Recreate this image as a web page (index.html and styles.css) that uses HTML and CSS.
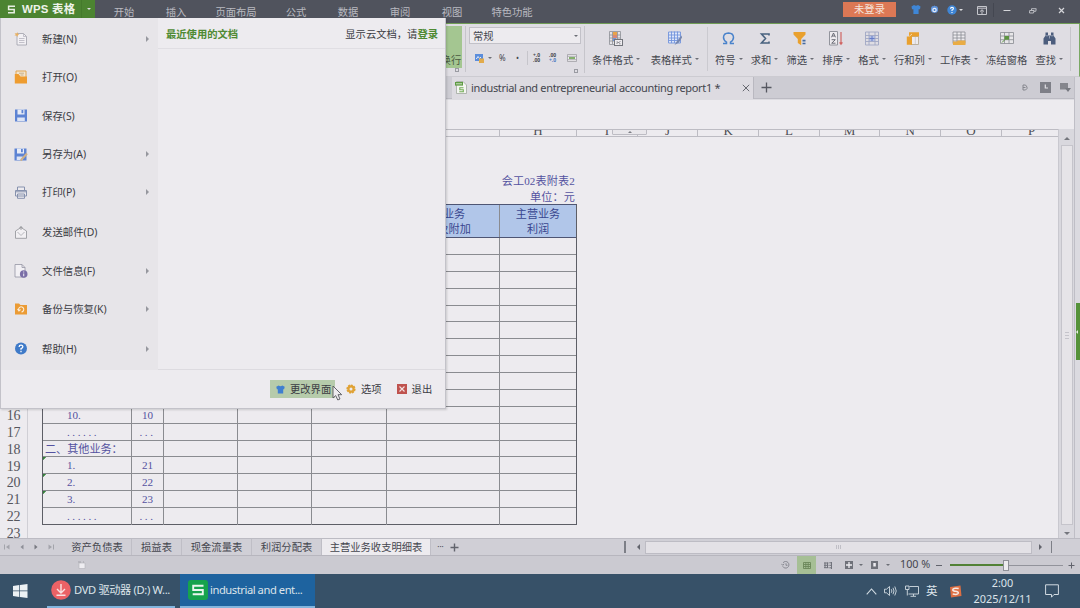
FILE: index.html
```html
<!DOCTYPE html>
<html lang="zh-CN">
<head>
    <meta charset="UTF-8">
    <meta name="viewport" content="width=device-width, initial-scale=1.0">
    <title>WPS 表格</title>
    <link rel="stylesheet" href="styles.css">
</head>
<body>
    <!-- title bar -->
    <header class="titlebar">
        <div class="app-button">
            <svg width="9" height="9" viewBox="0 0 9 9"><path d="M8 1.2H1.6V4.4H7.2V7.8H1" fill="none" stroke="#e8efe2" stroke-width="1.5"/></svg>
            <b>WPS 表格</b>
            <span class="app-arrow"><i class="caret light"></i></span>
        </div>
        <nav class="main-tabs">
            <span>开始</span><span>插入</span><span class="wide">页面布局</span><span>公式</span><span>数据</span><span>审阅</span><span>视图</span><span class="wide">特色功能</span>
        </nav>
        <div class="window-tools">
            <span class="login">未登录</span>
            <svg class="t-skin" width="10" height="9" viewBox="0 0 10 9"><path d="M0.5 1.5L3 0Q5 1.6 7 0L9.5 1.5L9 4.2H7.6V9H2.4V4.2H1Z" fill="#3f86d6"/></svg>
            <svg class="t-cloud" width="9" height="9" viewBox="0 0 9 9"><path d="M1 3L2 1.2H3.4L4.5 0.6L5.6 1.2H7L8 3V6Q7 8 4.5 8Q2 8 1 6Z" fill="#5f94dd"/><circle cx="4.5" cy="5" r="2.3" fill="#e6eefa"/><circle cx="4.5" cy="5" r="1" fill="#3f7ccc"/></svg>
            <svg class="t-help" width="10" height="10" viewBox="0 0 10 10"><circle cx="5" cy="5" r="4.7" fill="#3f86d6"/><path d="M3.5 3.8Q3.6 2.4 5 2.4Q6.5 2.4 6.4 3.7Q6.3 4.6 5 5.1V6M5 6.9V8" fill="none" stroke="#fff" stroke-width="1.1"/></svg>
            <i class="caret light"></i>
            <svg class="t-ribbon" width="10" height="9" viewBox="0 0 10 9"><path d="M0.5 0.5H9.5V8.5H0.5ZM0.5 2.2H9.5M5 8V4M3 5.6L5 3.7L7 5.6" fill="none" stroke="#c5c6cc"/></svg>
            <span class="t-line"></span>
            <svg class="t-min" width="8" height="9" viewBox="0 0 8 9"><path d="M0.5 4.5H7.5" stroke="#d5d6da"/></svg>
            <svg class="t-max" width="8" height="8" viewBox="0 0 8 8"><path d="M0.7 3.5H5L4.5 6H0.5ZM2.5 3.2V1.7H7.2L6.8 4.3H5" fill="none" stroke="#c5c6cc" stroke-width="0.9"/></svg>
            <svg class="t-close" width="7" height="7" viewBox="0 0 7 7"><path d="M1 1L6 6M6 1L1 6" stroke="#d5d6da" stroke-width="1.2"/></svg>
        </div>
    </header>

    <!-- ribbon -->
    <section class="ribbon">
        <div class="wrap-group">
            <div class="wrap-button">自动换行</div>
            <span class="corner"></span>
        </div>
        <div class="number-group">
            <div class="number-select">常规<i class="caret"></i></div>
            <div class="number-tools">
                <svg width="9" height="9" viewBox="0 0 9 9"><rect width="8" height="7" fill="#5b8ddb"/><path d="M1.3 5L3 2.5L4.5 4.5L6 3" fill="none" stroke="#e8effa"/><rect x="4" y="4.5" width="5" height="4.5" fill="#e2ab4b"/></svg>
                <i class="caret"></i>
                <span class="percent">%</span>
                <span class="comma">•</span>
                <span class="tool-line"></span>
                <span class="dec"><em>+.0</em><em>.00</em></span>
                <span class="dec"><em>.00</em><em class="blue">+.0</em></span>
                <svg width="10" height="8" viewBox="0 0 10 8"><path d="M0.5 0.5H9.5V7.5H0.5ZM0.5 2.3H9.5M0.5 5.7H9.5" fill="#edebef" stroke="#96979c" stroke-width="0.7"/><path d="M2 4H8" stroke="#69a04c" stroke-width="1.6"/></svg>
            </div>
            <span class="corner"></span>
        </div>
        <div class="tool-group styles-group">
            <div class="tool">
                <svg width="14" height="15" viewBox="0 0 14 15"><path d="M0.5 0.5H11.5V13.5H0.5ZM0.5 4H11.5M0.5 7H11.5M0.5 10H11.5M3.5 1V13M8.5 1V13" fill="#e6e4e8" stroke="#8d8f96" stroke-width="0.8"/><rect x="4" y="1" width="4" height="3" fill="#e8a34a"/><rect x="4" y="4" width="4" height="3" fill="#d88878"/><rect x="4" y="7" width="3" height="3" fill="#6f96da"/><rect x="5.5" y="8.5" width="8" height="6" fill="#edebef" stroke="#73757c"/><path d="M7.5 12.5L11.5 10.5M7.5 11H9M10 12.8H11.5" stroke="#73757c" stroke-width="0.8"/></svg>
                <span>条件格式<i class="caret"></i></span>
            </div>
            <div class="tool">
                <svg width="14" height="14" viewBox="0 0 14 14"><path d="M0.5 0.5H12.5V11.5H0.5Z" fill="#dfe6f7"/><path d="M0.5 0.5H12.5V11.5H0.5ZM0.5 3.5H12.5M0.5 6.5H12.5M0.5 9H12.5M3.5 0V11.5M6.5 0V11.5M9.5 0V11.5" fill="none" stroke="#7394dc" stroke-width="0.9"/><path d="M13.5 4L9 9.5L6.5 13.5L11 11L14 6Z" fill="#7787ae"/></svg>
                <span>表格样式<i class="caret"></i></span>
            </div>
        </div>
        <div class="tool-group edit-group">
            <div class="tool">
                <svg width="13" height="14" viewBox="0 0 13 14"><path d="M1 12H4.5V10.7Q1.5 8.8 1.5 5.8Q1.7 1.7 6.5 1.5Q11.3 1.7 11.5 5.8Q11.5 8.8 8.5 10.7V12H12" fill="none" stroke="#4a83cb" stroke-width="1.5"/></svg>
                <span>符号<i class="caret"></i></span>
            </div>
            <div class="tool">
                <svg width="12" height="14" viewBox="0 0 12 14"><path d="M10 4V2.5H2.5L6.5 7L2.5 11.5H10V10" fill="none" stroke="#48627f" stroke-width="1.6"/></svg>
                <span>求和<i class="caret"></i></span>
            </div>
            <div class="tool">
                <svg width="14" height="14" viewBox="0 0 14 14"><path d="M0.5 0.5H12.5V3L8.2 7.5V13.8L4.8 11.5V7.5L0.5 3Z" fill="#e9a02e"/><path d="M9.5 9.2H12.5M9.5 12H12.5" stroke="#446a9f" stroke-width="1.7"/></svg>
                <span>筛选<i class="caret"></i></span>
            </div>
            <div class="tool">
                <svg width="14" height="15" viewBox="0 0 14 15"><path d="M0.5 0.5H8.5V14H0.5Z" fill="#edebef" stroke="#92949c"/><path d="M2.5 6.3L4.5 2L6.5 6.3M3.2 5H5.8M2.6 8.7H6.3L2.7 12.2H6.5" fill="none" stroke="#5c5f69" stroke-width="0.9"/><path d="M12 1V13M10.6 11.3L12 13.3L13.4 11.3" fill="none" stroke="#d06563" stroke-width="1.2"/></svg>
                <span>排序<i class="caret"></i></span>
            </div>
            <div class="tool">
                <svg width="14" height="14" viewBox="0 0 14 14"><rect x="4" y="4" width="6" height="6" fill="#b4c0e6"/><path d="M0.5 0.5H13.5V13.5H0.5ZM0.5 4H13.5M0.5 7H13.5M0.5 10H13.5M4 0.5V13.5M10 0.5V13.5" fill="none" stroke="#a0a7c4" stroke-width="0.9"/><path d="M7 4.5V9.5M4.5 7H9.5" stroke="#667cc8"/></svg>
                <span>格式<i class="caret"></i></span>
            </div>
            <div class="tool">
                <svg width="14" height="14" viewBox="0 0 14 14"><path d="M5 5H12.5V13H5Z" fill="#edebef" stroke="#b5a995" stroke-width="0.9"/><path d="M3 0.8H13V5H6V13.2H0.8V5H3Z" fill="#e9a02e"/><path d="M3.3 4.8L6 2.5" stroke="#f3e6cf" stroke-width="0.8"/><path d="M9.3 5.5V12.5" stroke="#c9c7cd" stroke-width="0.8"/></svg>
                <span>行和列<i class="caret"></i></span>
            </div>
            <div class="tool">
                <svg width="14" height="14" viewBox="0 0 14 14"><path d="M1 0.5H13V12H1ZM1 3.5H13M1 6.5H13M1 9.5H13M5 0.5V12M9 0.5V12" fill="#edebef" stroke="#898b92" stroke-width="0.8"/><path d="M1 10H5L6 9H13.5V13.5H1Z" fill="#e9ac45"/></svg>
                <span>工作表<i class="caret"></i></span>
            </div>
            <div class="tool">
                <svg width="14" height="14" viewBox="0 0 14 14"><path d="M0.5 1H13.5V12H0.5ZM0.5 4.5H13.5M0.5 8.2H13.5M4.5 1V12M9 1V12" fill="#e8e7e9" stroke="#898b92" stroke-width="0.8"/><path d="M4.5 4.5H9V8.2H4.5Z" fill="#5c9440"/><path d="M2 11L5 8" stroke="#5c9440"/></svg>
                <span>冻结窗格</span>
            </div>
            <div class="tool">
                <svg width="13" height="14" viewBox="0 0 13 14"><path d="M2.5 1H5V4H8V1H10.5V4L12.5 7V13H8V9.5H5V13H0.5V7L2.5 4Z" fill="#4c5d7d"/><path d="M6.5 4.5V7M2.7 4.3H5M8 4.3H10.3" stroke="#aab3c4" stroke-width="0.8"/></svg>
                <span>查找<i class="caret"></i></span>
            </div>
        </div>
    </section>

    <div class="workspace">
        <div class="work-main">
            <!-- document tabs -->
            <div class="doc-tabs">
                <div class="doc-tab">
                    <svg width="12" height="13" viewBox="0 0 12 13"><path d="M1.5 0.5H8L11.5 4V12.5H1.5Z" fill="#f4f5f2" stroke="#a1a8a0" stroke-width="0.8"/><rect y="1" width="8" height="3.6" fill="#5d9b42"/><path d="M1 2.8H7" stroke="#cfe1c5"/><path d="M8.5 6.8H4.8V8.7H8.3V10.7H4.3" fill="none" stroke="#73ad57" stroke-width="1.1"/></svg>
                    <span>industrial and entrepreneurial accounting report1 *</span>
                    <svg class="tab-close" width="8" height="8" viewBox="0 0 8 8"><path d="M0.8 0.8L7.2 7.2M7.2 0.8L0.8 7.2" stroke="#666870"/></svg>
                </div>
                <svg class="doc-add" width="11" height="11" viewBox="0 0 11 11"><path d="M5.5 0.5V10.5M0.5 5.5H10.5" stroke="#565861" stroke-width="1.3"/></svg>
                <div class="doc-tools">
                    <svg width="6" height="7" viewBox="0 0 6 7"><path d="M1 1H3.5L5 3V4.5L3.5 6H1ZM1 3.5H3.5" fill="none" stroke="#85868d"/></svg>
                    <svg width="11" height="11" viewBox="0 0 11 11"><rect width="11" height="11" fill="#7e7f87"/><path d="M5.3 2.5V6H8" fill="none" stroke="#e0dfe4" stroke-width="1.2"/></svg>
                    <svg width="11" height="9" viewBox="0 0 11 9"><path d="M0 0H8V6.5H0Z" fill="#85868d"/><path d="M5 5H11L8 9Z" fill="#777980"/></svg>
                </div>
            </div>

            <div class="formula-bar"></div>

            <div class="sheet-area">
                <div class="sheet">
                    <div class="col-heads">
                        <span class="col-left"></span><span class="col-h">H</span><span>I</span><span>J</span><span>K</span><span>L</span><span>M</span><span>N</span><span>O</span><span>P</span>
                        <div class="fold-handle"><i></i></div>
                    </div>
                    <div class="sheet-body">
                        <div class="row-heads">
                            <span>16</span><span>17</span><span>18</span><span>19</span><span>20</span><span>21</span><span>22</span><span>23</span>
                        </div>
                        <div class="sheet-cells">
                            <div class="caption">会工02表附表2</div>
                            <div class="caption">单位：元</div>
                            <div class="report">
                                <div class="r head"><i></i><i></i><i></i><i></i><i></i><i>主营业务<br>税金及附加</i><i>主营业务<br>利润</i></div>
                                <div class="r"><i></i><i></i><i></i><i></i><i></i><i></i><i></i></div>
                                <div class="r"><i></i><i></i><i></i><i></i><i></i><i></i><i></i></div>
                                <div class="r"><i></i><i></i><i></i><i></i><i></i><i></i><i></i></div>
                                <div class="r"><i></i><i></i><i></i><i></i><i></i><i></i><i></i></div>
                                <div class="r"><i></i><i></i><i></i><i></i><i></i><i></i><i></i></div>
                                <div class="r"><i></i><i></i><i></i><i></i><i></i><i></i><i></i></div>
                                <div class="r"><i></i><i></i><i></i><i></i><i></i><i></i><i></i></div>
                                <div class="r"><i></i><i></i><i></i><i></i><i></i><i></i><i></i></div>
                                <div class="r"><i></i><i></i><i></i><i></i><i></i><i></i><i></i></div>
                                <div class="r"><i></i><i></i><i></i><i></i><i></i><i></i><i></i></div>
                                <div class="r"><i>10.</i><i>10</i><i></i><i></i><i></i><i></i><i></i></div>
                                <div class="r dots"><i>......</i><i>...</i><i></i><i></i><i></i><i></i><i></i></div>
                                <div class="r"><i class="group">二、其他业务：</i><i></i><i></i><i></i><i></i><i></i><i></i></div>
                                <div class="r"><i class="mark">1.</i><i>21</i><i></i><i></i><i></i><i></i><i></i></div>
                                <div class="r"><i class="mark">2.</i><i>22</i><i></i><i></i><i></i><i></i><i></i></div>
                                <div class="r"><i class="mark">3.</i><i>23</i><i></i><i></i><i></i><i></i><i></i></div>
                                <div class="r dots"><i>......</i><i>...</i><i></i><i></i><i></i><i></i><i></i></div>
                            </div>
                        </div>
                    </div>
                </div>
                <div class="v-scroll">
                    <i class="arrow up"></i>
                    <div class="v-thumb"><i></i><i></i><i></i></div>
                    <i class="arrow down"></i>
                </div>
            </div>
        </div>
        <aside class="side-strip"><div class="side-handle"><i></i></div></aside>
    </div>

    <!-- sheet tabs -->
    <div class="sheet-tabs">
        <div class="tab-nav">
            <svg width="6" height="6" viewBox="0 0 6 6"><path d="M0.5 0.5V5.5" stroke="#a3a4ab"/><path d="M5.5 0.5V5.5L2 3Z" fill="#a3a4ab"/></svg>
            <svg width="6" height="6" viewBox="0 0 6 6"><path d="M4.5 0.5V5.5L1.5 3Z" fill="#8d8f97"/></svg>
            <svg width="6" height="6" viewBox="0 0 6 6"><path d="M1.5 0.5V5.5L4.5 3Z" fill="#777980"/></svg>
            <svg width="6" height="6" viewBox="0 0 6 6"><path d="M5.5 0.5V5.5" stroke="#a3a4ab"/><path d="M0.5 0.5V5.5L4 3Z" fill="#a3a4ab"/></svg>
        </div>
        <span class="s-tab">资产负债表</span><span class="s-tab t2">损益表</span><span class="s-tab t3">现金流量表</span><span class="s-tab t3">利润分配表</span><span class="s-tab active">主营业务收支明细表</span>
        <span class="more">···</span>
        <svg width="9" height="9" viewBox="0 0 9 9"><path d="M4.5 0.5V8.5M0.5 4.5H8.5" stroke="#62646d" stroke-width="1.4"/></svg>
        <div class="h-scroll">
            <span class="bar"></span><i class="arrow left"></i>
            <div class="h-thumb"><i></i><i></i><i></i></div>
            <i class="arrow right"></i><span class="bar"></span>
        </div>
    </div>

    <!-- status bar -->
    <footer class="status">
        <svg class="s-doc" width="8" height="8" viewBox="0 0 8 8"><path d="M1 2H7V7.5H1Z" fill="#eeedf1" stroke="#b1b1b8" stroke-width="0.6"/><path d="M0 1H3M5 1H6" stroke="#a3a3aa"/></svg>
        <div class="status-right">
            <svg class="s-hist" width="9" height="8" viewBox="0 0 9 8"><path d="M2 1.8A3.3 3.3 0 1 1 1.7 5.3M0.3 2.8L1.8 4.3L3 2.8M5 2.3V4.3H6.5" fill="none" stroke="#777982" stroke-width="0.8"/></svg>
            <span class="view-on"><svg width="8" height="7" viewBox="0 0 8 7"><path d="M0.5 0.5H7.5V6.5H0.5ZM0.5 2.5H7.5M0.5 4.5H7.5M2.8 0.5V6.5M5.2 0.5V6.5" fill="none" stroke="#6b8759" stroke-width="0.9"/></svg></span>
            <svg class="s-page" width="8" height="7" viewBox="0 0 8 7"><path d="M0 1H4.5M0 3.3H4.5M0 5.7H4.5M1 0.5V6M3.5 0.5V6M5.3 0.8H8M5.3 3.3H8M5.3 5.8H8M7.5 0V7" fill="none" stroke="#70727b" stroke-width="1"/></svg>
            <svg class="s-split" width="8" height="8" viewBox="0 0 8 8"><path d="M0 0H8V8H0Z" fill="#6f7179"/><path d="M4 1V7M1 4H7" stroke="#eeedf1" stroke-width="1.3"/></svg>
            <i class="caret"></i>
            <svg class="s-book" width="7" height="8" viewBox="0 0 7 8"><path d="M0 0H7V8H0Z" fill="#6f7179"/><rect x="2.3" y="2" width="2.5" height="3.5" fill="#eeedf1"/></svg>
            <i class="caret"></i>
            <span class="zoom-num">100 %</span>
            <span class="zoom-minus"></span>
            <div class="zoom-track"><span class="zoom-fill"></span><span class="zoom-knob"></span><span class="zoom-rest"></span></div>
            <svg width="7" height="7" viewBox="0 0 7 7"><path d="M3.5 0.5V6.5M0.5 3.5H6.5" stroke="#62646d"/></svg>
        </div>
    </footer>

    <!-- taskbar -->
    <div class="taskbar">
        <svg class="win" width="15" height="14" viewBox="0 0 15 14"><path d="M0 2L6.3 1.1V6.6H0ZM7 1L14.5 0V6.6H7ZM0 7.3H6.3V12.9L0 12ZM7 7.3H14.5V14L7 13Z" fill="#edf1f4"/></svg>
        <div class="task">
            <svg width="20" height="20" viewBox="0 0 20 20"><circle cx="10" cy="10" r="9.8" fill="#ec6266"/><path d="M10 4V12.5M6 9L10 13L14 9M5.5 15.3H14.5" fill="none" stroke="#f9e3e3" stroke-width="1.4"/></svg>
            <span>DVD 驱动器 (D:) W...</span>
        </div>
        <div class="task active">
            <svg width="20" height="20" viewBox="0 0 20 20"><rect width="20" height="20" rx="3" fill="#16a34d"/><path d="M15.5 5.8H5.2V10H14.8V14.3H4.7" fill="none" stroke="#eaf6ee" stroke-width="1.9"/></svg>
            <span>industrial and ent...</span>
        </div>
        <div class="tray">
            <svg width="11" height="7" viewBox="0 0 11 7"><path d="M0.7 6.3L5.5 1L10.3 6.3" fill="none" stroke="#d2dbe2" stroke-width="1.1"/></svg>
            <svg width="13" height="12" viewBox="0 0 13 12"><path d="M0.5 4.2H2.5L5.5 1.5V10.5L2.5 7.8H0.5ZM7.3 4.2Q8.5 6 7.3 7.8M9 2.8Q11 6 9 9.2M10.8 1.5Q13.7 6 10.8 10.5" fill="none" stroke="#d2dbe2" stroke-width="0.9"/></svg>
            <svg width="14" height="12" viewBox="0 0 14 12"><path d="M4.5 1.5H13.5V9H3.5M5.5 11.3H11M8.5 9V11M0.5 1H4V4.5H0.5ZM2.3 4.5V10.5" fill="none" stroke="#d2dbe2" stroke-width="0.9"/></svg>
            <span class="ime">英</span>
            <svg class="sogou" width="13" height="13" viewBox="0 0 13 13"><path d="M1 2L11.5 0.5L12.5 11L2 12.5Z" fill="#dd6f43"/><path d="M9.7 3.6Q3.8 2.7 3.8 4.8Q4 6.2 6.5 6.3Q9.5 6.5 9.3 8Q9 10.1 3.7 9" fill="none" stroke="#f6e9e4" stroke-width="1.5"/></svg>
            <div class="clock">2:00<br>2025/12/11</div>
            <svg width="14" height="14" viewBox="0 0 14 14"><path d="M0.6 0.8H13.4V10.5H9L6.5 13.2V10.5H0.6Z" fill="none" stroke="#d2dbe2" stroke-width="1"/></svg>
        </div>
    </div>

    <!-- file menu -->
    <div class="file-menu">
        <div class="menu-top">
            <ul class="menu-list">
                <li>
                    <svg width="13" height="14" viewBox="0 0 13 14"><path d="M2.5 1.5H9L12 4.5V13H2.5Z" fill="#f2f0f4" stroke="#a09faa" stroke-width="0.8"/><path d="M9 1.5V4.5H12M4.5 6.5H10M4.5 8.5H10M4.5 10.5H10" fill="none" stroke="#b5b4be" stroke-width="0.8"/><path d="M0 1L2 1.5L3 0L3.3 2L5 2.5L3.3 3.3L3 5L2 3.4L0 3.5L1.2 2.3Z" fill="#e9b061"/></svg>
                    <span>新建(N)</span><i class="sub"></i>
                </li>
                <li>
                    <svg width="13" height="14" viewBox="0 0 13 14"><path d="M1.5 1H11.5V8H1.5Z" fill="#f4e5cd" stroke="#e0a654"/><path d="M4.5 3.2H9.5M6 5H9" stroke="#c8b08a"/><path d="M0.3 4H4L6 6.5H12.5V13.5H0.3Z" fill="#ee9c30"/></svg>
                    <span>打开(O)</span>
                </li>
                <li>
                    <svg width="13" height="13" viewBox="0 0 13 13"><path d="M0.5 0.5H12.5V12.5H0.5Z" fill="#5d83d3"/><rect x="3" y="0.5" width="7" height="5" fill="#e8ecf6"/><rect x="7" y="1" width="1.8" height="3.2" fill="#5d83d3"/><rect x="2.7" y="8.5" width="7.6" height="3.5" fill="#dde4f4"/></svg>
                    <span>保存(S)</span>
                </li>
                <li>
                    <svg width="14" height="13" viewBox="0 0 14 13"><path d="M0.5 0.5H12.5V12.5H0.5Z" fill="#5d83d3"/><rect x="3" y="0.5" width="7" height="5" fill="#e8ecf6"/><rect x="7" y="1" width="1.8" height="3.2" fill="#5d83d3"/><rect x="2.7" y="8.5" width="6" height="3.5" fill="#dde4f4"/><path d="M13 5.5L8 11L6.7 12.7" stroke="#cdb089" stroke-width="2"/></svg>
                    <span>另存为(A)</span><i class="sub"></i>
                </li>
                <li>
                    <svg width="13" height="13" viewBox="0 0 13 13"><path d="M3 4.5V1H10V4.5M1 4.5H12V10H1ZM3 8H10V12.3H3Z" fill="#edebef" stroke="#8792ae" stroke-width="1"/><path d="M1 5.8H12" stroke="#8792ae"/></svg>
                    <span>打印(P)</span><i class="sub"></i>
                </li>
                <li class="gap">
                    <svg width="13" height="13" viewBox="0 0 13 13"><path d="M1 5L6.5 1.5L12 5V12.3H1Z" fill="#f2f0f3" stroke="#8f9096" stroke-width="0.8"/><path d="M3 6L6.5 9.5L10 6" fill="none" stroke="#a6a7ad" stroke-width="0.8"/><path d="M6.5 0.5V4M5 2L6.5 0.5L8 2" fill="none" stroke="#8f9096" stroke-width="0.8"/></svg>
                    <span>发送邮件(D)</span>
                </li>
                <li>
                    <svg width="14" height="14" viewBox="0 0 14 14"><path d="M1 0.5H8L11 3.5V13H1Z" fill="#f2f0f4" stroke="#9695a3" stroke-width="0.8"/><path d="M8 0.5V3.5H11" fill="none" stroke="#9695a3" stroke-width="0.8"/><circle cx="9.7" cy="10" r="3.8" fill="#7a6ea6"/><path d="M9.7 7.6V8.6M9.7 9.5V12.3" stroke="#e8e4f0" stroke-width="1.1"/></svg>
                    <span>文件信息(F)</span><i class="sub"></i>
                </li>
                <li>
                    <svg width="13" height="12" viewBox="0 0 13 12"><path d="M0.5 0.5H4.5L6 2H12.5V11.5H0.5Z" fill="#eb9b35"/><path d="M4.3 7.5A2.6 2.6 0 1 1 7 9M3 6L4.4 8L6 6.5" fill="none" stroke="#fbeeda" stroke-width="1.1"/></svg>
                    <span>备份与恢复(K)</span><i class="sub"></i>
                </li>
                <li class="gap">
                    <svg width="13" height="13" viewBox="0 0 13 13"><circle cx="6.5" cy="6.5" r="6" fill="#3f7ac8"/><path d="M4.6 5Q4.7 3.2 6.5 3.2Q8.5 3.2 8.3 4.9Q8.2 6 6.5 6.7V7.8M6.5 8.8V10.2" fill="none" stroke="#fff" stroke-width="1.3"/></svg>
                    <span>帮助(H)</span><i class="sub"></i>
                </li>
            </ul>
            <div class="recent">
                <div class="recent-head">
                    <b>最近使用的文档</b>
                    <span>显示云文档，请<b>登录</b></span>
                </div>
            </div>
        </div>
        <div class="menu-bottom">
            <span class="m-btn on"><svg width="9" height="9" viewBox="0 0 10 9"><path d="M0.3 1.5L3 0Q5 1.6 7 0L9.7 1.5L9 4.2H8V9H2V4.2H1Z" fill="#3f7fd0"/></svg>更改界面</span>
            <span class="m-btn opt"><svg width="10" height="10" viewBox="0 0 10 10"><circle cx="5" cy="5" r="3.7" fill="none" stroke="#e0a235" stroke-width="1.8" stroke-dasharray="2 0.8"/><circle cx="5" cy="5" r="2.6" fill="none" stroke="#e0a235" stroke-width="2.2"/></svg>选项</span>
            <span class="m-btn quit"><svg width="10" height="10" viewBox="0 0 10 10"><rect width="10" height="10" fill="#bf524e"/><path d="M2.5 2.5L7.5 7.5M7.5 2.5L2.5 7.5" stroke="#f3e2e1" stroke-width="1.1"/></svg>退出</span>
        </div>
        <svg class="pointer" width="12" height="17" viewBox="0 0 12 17"><path d="M1 1V13L3.7 10.6L5.8 15L8 14L6 9.7H9.7Z" fill="#edebef" stroke="#55565c" stroke-width="0.9"/></svg>
    </div>
</body>
</html>
```
FILE: styles.css
```css
* {
    box-sizing: border-box;
}

body {
    margin: 0;
    width: 1080px;
    height: 608px;
    overflow: hidden;
    position: relative;
    display: flex;
    flex-direction: column;
    background-color: #edebef;
    color: #44464e;
    font-family: "Noto Sans", "Noto Sans CJK SC", sans-serif;
    font-size: 10.3px;
    line-height: 14px;
    white-space: nowrap;
}

svg {
    display: block;
    flex: none;
}

i, em {
    font-style: normal;
}

.caret {
    display: inline-block;
    border-left: 2px solid transparent;
    border-right: 2px solid transparent;
    border-top: 2.5px solid #6c6e76;
}

.caret.light {
    border-top-color: #dcdde0;
}

/* title bar */
.titlebar {
    height: 24px;
    flex: none;
    display: flex;
    background-color: #50535d;
    border-bottom: 1px solid #6f9c55;
    color: #b9bac0;
}

.app-button {
    width: 95px;
    height: 18px;
    display: flex;
    align-items: center;
    padding-left: 7px;
    background-color: #4c8431;
    color: #eef3ea;
}

.app-button b {
    margin-left: 6px;
    width: 59px;
    font-family: "Liberation Sans", "Noto Sans CJK SC", sans-serif;
    font-size: 11.4px;
    letter-spacing: 0.25px;
}

.app-arrow {
    width: 14px;
    height: 18px;
    display: flex;
    align-items: center;
    justify-content: center;
    border-left: 1px solid #457a2c;
}

.main-tabs {
    display: flex;
    margin-left: 3px;
    padding-top: 4.5px;
}

.main-tabs span {
    width: 52px;
    text-align: center;
}

.main-tabs .wide {
    width: 68px;
}

.window-tools {
    flex: 1;
    height: 19px;
    display: flex;
    align-items: center;
    justify-content: flex-end;
    padding-right: 15px;
}

.login {
    width: 53px;
    height: 15px;
    background-color: #dc7855;
    color: #f6e4dc;
    text-align: center;
    line-height: 15px;
}

.t-skin { margin-left: 13px; }
.t-cloud { margin-left: 9px; }
.t-help { margin-left: 8px; }
.window-tools .caret { margin-left: 2px; }
.t-ribbon { margin: 2px 0 0 14px; }
.t-line {
    width: 1px;
    height: 14px;
    margin-left: 6px;
    background-color: #444751;
}
.t-min { margin: 2px 0 0 9px; }
.t-max { margin: 2px 0 0 18px; }
.t-close { margin: 2px 0 0 21px; }

.login { margin-right: 2px; }

/* ribbon */
.ribbon {
    height: 53px;
    flex: none;
    display: flex;
    padding-left: 420px;
    background-color: #dfdde3;
    border-right: 1px solid #7aa864;
    border-bottom: 1px solid #cccbd1;
}

.wrap-group {
    width: 46px;
    border-right: 1px solid #c6c5cb;
    margin: 2px 0 4px;
    position: relative;
    height: 46px;
}

.wrap-button {
    width: 42px;
    height: 42px;
    padding-top: 27px;
    background-color: #a4c691;
    color: #4b5a43;
    text-align: right;
    padding-right: 4px;
}

.corner {
    position: absolute;
    right: 6px;
    bottom: 0;
    width: 4px;
    height: 4px;
    border: 1px solid #9a9ba2;
}

.number-group {
    width: 119px;
    height: 47px;
    margin-top: 2px;
    padding: 1px 3px;
    border-right: 1px solid #c6c5cb;
    position: relative;
}

.number-select {
    height: 17px;
    width: 112px;
    display: flex;
    align-items: center;
    justify-content: space-between;
    padding: 0 2px 0 3px;
    background-color: #edebef;
    border: 1px solid #c2c1c8;
}

.number-tools {
    display: flex;
    align-items: center;
    height: 14px;
    margin-top: 7px;
    padding-left: 6px;
}

.number-tools .caret { margin-left: 4px; }
.percent { margin-left: 7px; width: 10px; font-size: 8px; }
.comma { margin-left: 7px; width: 5px; font-size: 8px; }
.tool-line {
    width: 1px;
    height: 14px;
    margin: 0 5px 0 6px;
    background-color: #c6c5cb;
}
.dec {
    width: 16px;
    font-size: 5px;
    line-height: 5px;
    font-weight: bold;
}
.dec em { display: block; }
.dec .blue { color: #4c78c0; }
.number-tools .dec + svg { margin-left: 2px; }

.tool-group {
    height: 44px;
    margin-top: 3px;
    display: flex;
}

.styles-group {
    gap: 10.5px;
    width: 123px;
    padding-left: 7px;
    border-right: 1px solid #cbcad0;
}

.edit-group {
    gap: 8.2px;
    padding: 0 7px 0 7px;
    border-right: 1px solid #c6c5cb;
}

.tool {
    display: flex;
    flex-direction: column;
    align-items: center;
    padding-top: 4px;
}

.tool svg {
    margin-bottom: 7px;
    height: 15px;
}

.tool .caret {
    margin: 0 0 4px 3px;
}

/* document area */
.workspace {
    height: 461px;
    flex: none;
    display: flex;
}

.work-main {
    width: 1075px;
    border-right: 1px solid #bfbec6;
}

.doc-tabs {
    height: 22px;
    display: flex;
    align-items: center;
    padding-left: 452px;
    background-color: #cdccd3;
    border-bottom: 1px solid #bcbbc3;
}

.doc-tab {
    width: 302px;
    height: 22px;
    display: flex;
    align-items: center;
    padding-left: 3px;
    background-color: #dddbe1;
    border-right: 1px solid #b9b8c0;
    font-size: 11px;
}

.doc-tab span {
    margin-left: 4px;
    width: 252px;
    letter-spacing: -0.33px;
}

.tab-close { margin-left: 19px; }
.doc-add { margin-left: 7px; }

.doc-tools {
    flex: 1;
    display: flex;
    align-items: center;
    justify-content: flex-end;
    gap: 9px;
    padding-right: 3px;
}

.doc-tools svg:first-child { margin-right: 3px; }

.formula-bar {
    height: 30px;
    border-top: 1px solid #dddce1;
}

.sheet-area {
    height: 409px;
    display: flex;
}

.sheet {
    width: 1059px;
    overflow: hidden;
    border-right: 1px solid #c9c8cf;
}

.col-heads {
    height: 8px;
    display: flex;
    position: relative;
    border-top: 1px solid #bdbcc3;
    border-bottom: 1px solid #bdbcc3;
    overflow: hidden;
    font-family: "Liberation Serif", "Noto Sans CJK SC", serif;
    font-size: 13px;
    line-height: 1px;
    color: #4d4e54;
}

.col-heads span {
    width: 60.7px;
    flex: none;
    height: 7px;
    border-right: 1px solid #bdbcc3;
    text-align: center;
}

.col-heads .col-left { width: 500px; }
.col-heads .col-h { width: 77px; }

.fold-handle {
    position: absolute;
    left: 612px;
    top: -1px;
    width: 35px;
    height: 6px;
    border: 1px solid #bdbcc3;
    border-radius: 1px;
    background-color: #e9e7eb;
    display: flex;
    justify-content: center;
    align-items: center;
}

.fold-handle i {
    border-left: 2px solid transparent;
    border-right: 2px solid transparent;
    border-bottom: 2px solid #7d7e85;
}

.sheet-body {
    height: 401px;
    display: flex;
    overflow: hidden;
    font-family: "Liberation Serif", "Noto Sans CJK SC", serif;
}

.row-heads {
    width: 28px;
    padding-top: 269px;
    border-right: 1px solid #d0cfd5;
    font-size: 14px;
    letter-spacing: -0.3px;
    color: #55565d;
    text-align: center;
}

.row-heads span {
    display: block;
    height: 16.86px;
    line-height: 19px;
}

.sheet-cells {
    padding: 35px 0 0 14px;
    color: #5452a0;
    font-size: 11.1px;
    line-height: 15px;
}

.caption {
    width: 533px;
    height: 16px;
    line-height: 18px;
    text-align: right;
    letter-spacing: 0.15px;
}

.report {
    width: 535px;
    border: 1px solid #5d5e66;
    border-top-color: #4e5573;
    border-bottom: 0;
}

.r {
    height: 16.88px;
    display: grid;
    grid-template-columns: 89px 32px 74px 74px 75px 113px 76px;
    border-bottom: 1px solid #8a8b90;
    line-height: 17px;
}

.r:last-child {
    border-bottom-color: #5d5e66;
}

.r i {
    border-right: 1px solid #8a8b90;
    text-align: center;
}

.r i:last-child {
    border-right: 0;
}

.r i:first-child {
    padding-left: 24px;
    text-align: left;
}

.r.dots i {
    letter-spacing: 2.6px;
}

.r i.group {
    padding-left: 2px;
}

.r i.mark {
    background-image: linear-gradient(135deg, #35803b 2px, transparent 2.5px);
}

.r.head {
    height: 33px;
    padding-top: 0;
    line-height: 15px;
    background-color: #b1c6e9;
    color: #39468f;
    border-bottom-color: #4e5573;
}

.r.head i {
    padding-top: 2px;
}

/* scrollbars */
.v-scroll {
    width: 15px;
    display: flex;
    flex-direction: column;
    align-items: center;
    padding: 8px 0 3px;
    background-color: #d9d8de;
}

.arrow {
    border: 3px solid transparent;
    flex: none;
}

.arrow.up { border-bottom-color: #74767d; border-top: 0; }
.arrow.down { border-top-color: #74767d; border-bottom: 0; }
.arrow.left { border-right-color: #62646d; border-left: 0; }
.arrow.right { border-left-color: #62646d; border-right: 0; }

.v-thumb {
    flex: 1;
    width: 12px;
    margin: 5px 0 7px;
    display: flex;
    flex-direction: column;
    align-items: center;
    justify-content: center;
    gap: 2px;
    background-color: #e6e4e8;
    border: 1px solid #c5c4cb;
}

.v-thumb i {
    width: 4px;
    height: 1px;
    background-color: #c5c4cb;
}

.side-strip {
    width: 5px;
    padding: 226px 0 0 1px;
    background-color: #dbdae0;
}

.side-handle {
    height: 57px;
    background-color: #55923a;
    display: flex;
    align-items: center;
}

.side-handle i {
    border: 2px solid transparent;
    border-left: 0;
    border-right-color: #e9f0e5;
}

/* sheet tabs */
.sheet-tabs {
    height: 18px;
    flex: none;
    display: flex;
    align-items: center;
    background-color: #d0cfd6;
    border-top: 1px solid #bcbbc3;
    border-bottom: 1px solid #b7b6be;
}

.tab-nav {
    width: 63px;
    display: flex;
    gap: 8.5px;
    padding-left: 4px;
}

.s-tab {
    width: 69px;
    height: 16px;
    line-height: 16px;
    text-align: center;
    border-right: 1px solid #bfbec6;
}

.s-tab.t2 { width: 50px; }
.s-tab.t3 { width: 70px; }
.s-tab.active {
    width: 109px;
    background-color: #edebef;
}

.more {
    width: 19px;
    text-align: center;
    font-size: 8px;
}

.h-scroll {
    display: flex;
    align-items: center;
    width: 428px;
    margin-left: 165px;
}

.bar {
    width: 1.5px;
    height: 12px;
    background-color: #7d7f87;
}

.arrow.left { margin: 0 5px 0 11px; }
.arrow.right { margin: 0 9px 0 7px; }

.h-thumb {
    width: 387px;
    height: 13px;
    display: flex;
    align-items: center;
    justify-content: center;
    gap: 1px;
    background-color: #e3e1e6;
    border: 1px solid #bdbcc4;
}

.h-thumb i {
    width: 1px;
    height: 4px;
    background-color: #c0bfc6;
}

/* status bar */
.status {
    height: 18px;
    flex: none;
    display: flex;
    align-items: center;
    padding-left: 78px;
    background-color: #cbcad1;
}

.status-right {
    flex: 1;
    display: flex;
    align-items: center;
    justify-content: flex-end;
    padding-right: 5px;
}

.view-on {
    width: 19px;
    height: 18px;
    margin-left: 7px;
    display: flex;
    align-items: center;
    justify-content: center;
    background-color: #a6bf95;
}

.s-page { margin-left: 8px; }
.s-split { margin-left: 13px; }
.s-book { margin-left: 8px; }
.status .caret { margin-left: 6px; }
.s-book + .caret { margin-left: 8px; }

.zoom-num {
    width: 30px;
    margin-left: 10px;
    font-size: 10.8px;
    line-height: 16px;
    padding-bottom: 2px;
}

.zoom-minus {
    width: 6px;
    height: 1px;
    margin: 0 8px 0 6px;
    background-color: #62646d;
}

.zoom-track {
    width: 113px;
    margin-right: 5px;
    display: flex;
    align-items: center;
}

.zoom-fill {
    width: 53px;
    height: 2px;
    background-color: #528136;
}

.zoom-knob {
    width: 6px;
    height: 11px;
    background-color: #edebef;
    border: 1px solid #8e8f97;
}

.zoom-rest {
    flex: 1;
    height: 1px;
    background-color: #92939b;
}

/* taskbar */
.taskbar {
    height: 34px;
    flex: none;
    display: flex;
    align-items: center;
    padding-left: 13px;
    background-color: #375168;
    color: #dde4ea;
    font-size: 11.2px;
}

.task {
    width: 128px;
    height: 34px;
    margin-left: 19px;
    padding-left: 4px;
    display: flex;
    align-items: center;
    border-bottom: 2px solid #82b5de;
}

.task span {
    margin-left: 3px;
    letter-spacing: -0.45px;
}

.task:not(.active) span { letter-spacing: -0.35px; }

.task.active {
    width: 135px;
    margin-left: 5px;
    padding-left: 8px;
    background-color: #1e639f;
}

.task.active span { margin-left: 2px; }

.tray {
    flex: 1;
    display: flex;
    align-items: center;
    justify-content: flex-end;
    gap: 7.5px;
    padding-right: 21px;
}

.ime { font-size: 11.5px; }
.sogou { margin-left: 4px; }

.clock {
    width: 60px;
    margin: 0 5px 0 3px;
    text-align: center;
    font-size: 10.9px;
    line-height: 16px;
}

/* file menu */
.file-menu {
    position: absolute;
    left: 0;
    top: 18px;
    width: 446px;
    height: 391px;
    background-color: #edebef;
    border: 1px solid #c3c2c9;
    border-top: 0;
    box-shadow: 1px 1px 2px rgba(0, 0, 0, 0.15);
}

.menu-top {
    height: 352px;
    display: flex;
}

.menu-list {
    width: 157px;
    margin: 0;
    padding: 2px 0 0;
    list-style: none;
    background-color: #e7e5e9;
    color: #3b3c43;
}

.menu-list li {
    height: 38.3px;
    display: flex;
    align-items: center;
    padding: 0 9px 0 13px;
}

.menu-list .gap { margin-top: 1.6px; }

.menu-list span {
    flex: 1;
    margin-left: 14px;
    font-size: 10.4px;
}

.menu-list svg {
    width: 14px;
}

.sub {
    border: 3px solid transparent;
    border-left-color: #96979e;
    border-right: 0;
}

.recent {
    width: 287px;
    border-bottom: 1px solid #dddbe0;
}

.recent-head {
    height: 31px;
    display: flex;
    justify-content: space-between;
    align-items: center;
    padding: 2px 7px 0 8px;
    border-bottom: 1px solid #e0dee3;
    color: #3b3c43;
}

.recent-head b { color: #4f8a33; }

.menu-bottom {
    display: flex;
    padding: 10px 0 0 269px;
    color: #3b3c43;
}

.m-btn {
    height: 18px;
    display: flex;
    align-items: center;
    gap: 5px;
    padding-left: 6px;
}

.m-btn.on {
    width: 65px;
    background-color: #b6cbab;
}

.m-btn.opt { margin-left: 5px; }
.m-btn.quit { margin-left: 9px; }

.pointer {
    position: absolute;
    left: 331px;
    top: 367px;
}
```
